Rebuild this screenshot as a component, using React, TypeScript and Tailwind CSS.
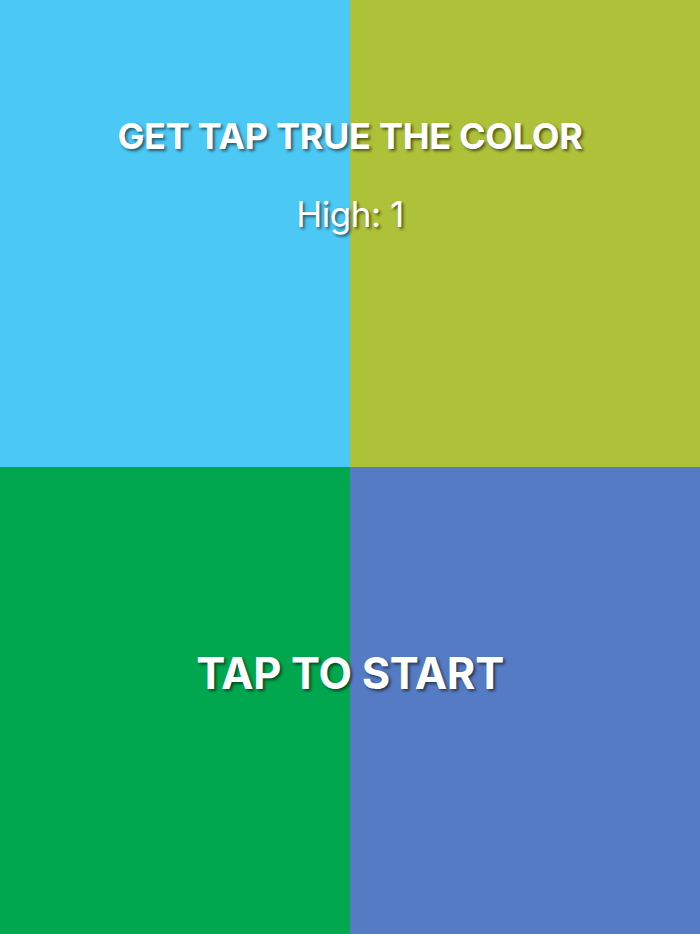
import React from "react";

// four colour tiles of the board, in reading order
const tiles = ["bg-[#4bc8f4]", "bg-[#adc238]", "bg-[#01a74f]", "bg-[#547bc3]"];

const shadow = "[text-shadow:2px_2px_3px_rgba(0,0,0,0.55)]";

export default function App() {
  return (
    <div className="relative h-[934px] w-[700px] overflow-hidden font-['Inter',sans-serif] text-white">
      <div className="grid h-full grid-cols-2 grid-rows-2">
        {tiles.map((c) => (
          <div key={c} className={c} />
        ))}
      </div>

      {/* title + best score over the top half */}
      <div className="absolute inset-x-0 top-[112px] flex flex-col items-center">
        <h1 className={`text-[36px] font-bold leading-[48px] tracking-[-0.3px] ${shadow}`}>
          GET TAP TRUE THE COLOR
        </h1>
        <p className={`mt-[34px] text-[35px] leading-[40px] tracking-[-0.5px] ${shadow}`}>High: 1</p>
      </div>

      <div className="absolute inset-x-0 top-[646px] flex justify-center">
        <span className={`text-[43.5px] font-bold leading-[54px] tracking-[-0.3px] ${shadow}`}>
          TAP TO START
        </span>
      </div>
    </div>
  );
}
